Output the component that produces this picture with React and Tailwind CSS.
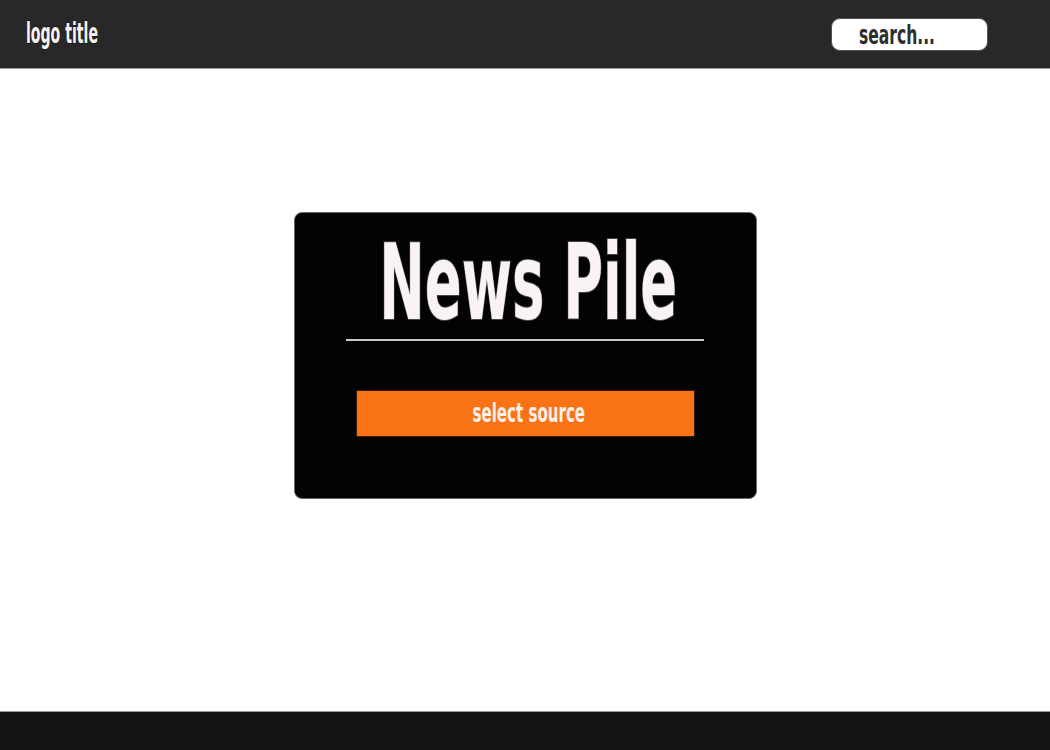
import React from "react";

const F = { fontFamily: '"DejaVu Sans Condensed", "DejaVu Sans", sans-serif' };

export default function App() {
  return (
    <div className="flex min-h-[750px] flex-col bg-white" style={F}>
      <header className="flex h-[69px] items-center justify-between border-b border-[#9a9a9a] bg-[#282828] pl-[26px] pr-[62px]">
        <span className="inline-block origin-left scale-x-[0.56] whitespace-nowrap text-[28px] font-bold leading-none text-[#faf3f3] [-webkit-text-stroke:1.5px_#1a1a1a] [paint-order:stroke_fill]">
          logo title
        </span>
        <div className="flex h-[33px] w-[157px] items-center rounded-[9px] border border-[#555] bg-white pl-[27px]">
          <span className="inline-block origin-left scale-x-[0.64] whitespace-nowrap text-[27px] font-bold leading-none text-[#2e2e2e]">
            search...
          </span>
        </div>
      </header>
      <main className="flex flex-1 justify-center pt-[143px]">
        <div className="flex h-[287px] w-[463px] flex-col items-center rounded-[8px] border border-[#6a6a6a] bg-[#030303]">
          <h1 className="ml-[6px] mt-[17px] inline-block scale-x-[0.57] whitespace-nowrap text-[106px] font-bold leading-[105px] text-[#faf3f3] [-webkit-text-stroke:2px_#444] [paint-order:stroke_fill]">
            News Pile
          </h1>
          <div className="mt-[4px] h-[2px] w-[358px] bg-[#c8c8c8]" />
          <button className="mt-[49px] flex h-[47px] w-[339px] items-center justify-center border border-[#3a1a08] bg-[#f97316] pl-[8px] pb-[2px]">
            <span className="inline-block scale-x-[0.62] whitespace-nowrap text-[27px] font-bold leading-none text-[#fdf0ec]">
              select source
            </span>
          </button>
        </div>
      </main>
      <footer className="h-[39px] border-t border-[#9a9a9a] bg-[#141414]" />
    </div>
  );
}
